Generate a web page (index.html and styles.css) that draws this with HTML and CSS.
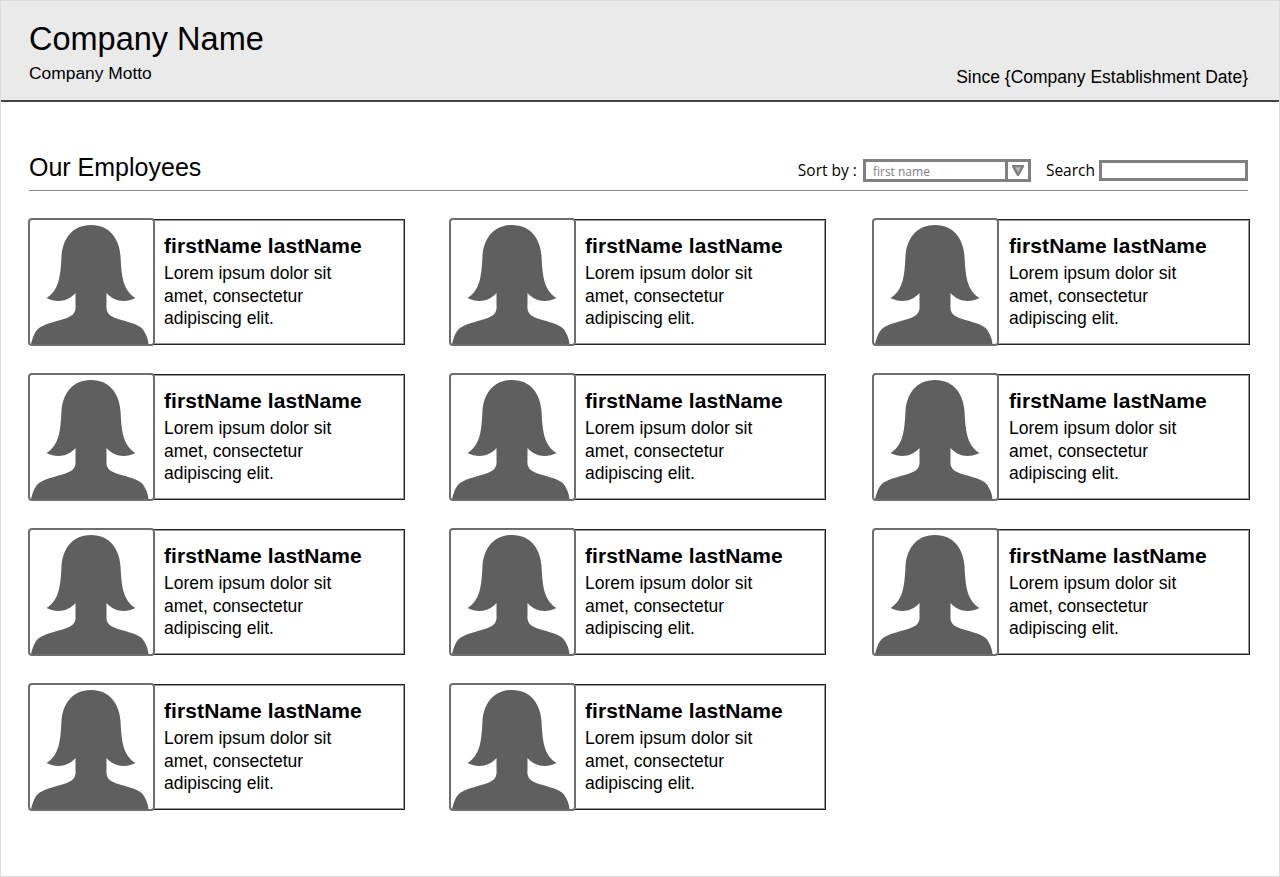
FILE: index.html
```html
<!DOCTYPE html>
<html lang="en">
<head>
    <meta charset="UTF-8">
    <meta name="viewport" content="width=device-width, initial-scale=1.0">
    <title>Our Employees</title>
    <link rel="stylesheet" href="styles.css">
</head>
<body>
    <svg class="sprites" width="0" height="0" aria-hidden="true">
        <symbol id="person" viewBox="0 0 122 124">
            <path d="M60.5 5 C41 5 32 20 31 36 C30 55 29 70 16 78 C26 83 37 82 45 73 L45 85 C46 95 40 97 30 100 C20 103 9 105 5 112 C3 115 1.5 120 0.5 124 L118 124 C117.5 120 116.5 116 114 112 C111 105 101 103 91 100 C81 97 75 95 76 85 L76 73 C84 82 95 83 105 78 C92 70 91 55 90 36 C89 20 80 5 60.5 5 Z"/>
        </symbol>
    </svg>

    <div class="page">
        <header class="top">
            <div>
                <h1>Company Name</h1>
                <div class="motto">Company Motto</div>
            </div>
            <div class="since">Since {Company Establishment Date}</div>
        </header>

        <section class="section">
            <div class="section-head">
                <h2>Our Employees</h2>
                <div class="tools">
                    <label class="tool-label">Sort by :</label>
                    <div class="select">
                        <span class="select-value">first name</span>
                        <span class="select-btn">
                            <svg class="arrow" viewBox="0 0 12 11"><polygon points="1,1 11,1 6,10"/></svg>
                        </span>
                    </div>
                    <label class="tool-label search-label" for="search">Search</label>
                    <input class="search" type="text" id="search">
                </div>
            </div>

            <div class="cards">
                <div class="card">
                    <div class="photo"><svg><use href="#person"/></svg></div>
                    <div class="info">
                        <h3>firstName lastName</h3>
                        <p>Lorem ipsum dolor sit amet, consectetur adipiscing elit.</p>
                    </div>
                </div>
                <div class="card">
                    <div class="photo"><svg><use href="#person"/></svg></div>
                    <div class="info">
                        <h3>firstName lastName</h3>
                        <p>Lorem ipsum dolor sit amet, consectetur adipiscing elit.</p>
                    </div>
                </div>
                <div class="card">
                    <div class="photo"><svg><use href="#person"/></svg></div>
                    <div class="info">
                        <h3>firstName lastName</h3>
                        <p>Lorem ipsum dolor sit amet, consectetur adipiscing elit.</p>
                    </div>
                </div>
                <div class="card">
                    <div class="photo"><svg><use href="#person"/></svg></div>
                    <div class="info">
                        <h3>firstName lastName</h3>
                        <p>Lorem ipsum dolor sit amet, consectetur adipiscing elit.</p>
                    </div>
                </div>
                <div class="card">
                    <div class="photo"><svg><use href="#person"/></svg></div>
                    <div class="info">
                        <h3>firstName lastName</h3>
                        <p>Lorem ipsum dolor sit amet, consectetur adipiscing elit.</p>
                    </div>
                </div>
                <div class="card">
                    <div class="photo"><svg><use href="#person"/></svg></div>
                    <div class="info">
                        <h3>firstName lastName</h3>
                        <p>Lorem ipsum dolor sit amet, consectetur adipiscing elit.</p>
                    </div>
                </div>
                <div class="card">
                    <div class="photo"><svg><use href="#person"/></svg></div>
                    <div class="info">
                        <h3>firstName lastName</h3>
                        <p>Lorem ipsum dolor sit amet, consectetur adipiscing elit.</p>
                    </div>
                </div>
                <div class="card">
                    <div class="photo"><svg><use href="#person"/></svg></div>
                    <div class="info">
                        <h3>firstName lastName</h3>
                        <p>Lorem ipsum dolor sit amet, consectetur adipiscing elit.</p>
                    </div>
                </div>
                <div class="card">
                    <div class="photo"><svg><use href="#person"/></svg></div>
                    <div class="info">
                        <h3>firstName lastName</h3>
                        <p>Lorem ipsum dolor sit amet, consectetur adipiscing elit.</p>
                    </div>
                </div>
                <div class="card">
                    <div class="photo"><svg><use href="#person"/></svg></div>
                    <div class="info">
                        <h3>firstName lastName</h3>
                        <p>Lorem ipsum dolor sit amet, consectetur adipiscing elit.</p>
                    </div>
                </div>
                <div class="card">
                    <div class="photo"><svg><use href="#person"/></svg></div>
                    <div class="info">
                        <h3>firstName lastName</h3>
                        <p>Lorem ipsum dolor sit amet, consectetur adipiscing elit.</p>
                    </div>
                </div>
            </div>
        </section>
    </div>
</body>
</html>
```

FILE: styles.css
```css
/* General Styles */
html, body {
    margin: 0;
    padding: 0;
    height: 100%;
    overflow: hidden;
}

body {
    font-family: 'Liberation Sans', Arial, sans-serif;
    background: #fff;
    color: #000;
}

.sprites {
    display: block;
    height: 0;
}

.page {
    box-sizing: border-box;
    height: 877px;
    border: 1px solid #dcdcdc;
}

/* Header */
.top {
    box-sizing: border-box;
    height: 101px;
    padding: 20px 31px 11px 28px;
    background: #eaeaea;
    border-bottom: 2px solid #444;
    display: flex;
    justify-content: space-between;
    align-items: flex-end;
}

.top h1 {
    margin: 0 0 5px;
    font-size: 32.5px;
    line-height: 38px;
    font-weight: 400;
}

.motto {
    font-size: 17.4px;
    line-height: 20px;
    margin-bottom: 6px;
}

.since {
    font-size: 17.5px;
    line-height: 20px;
    margin-bottom: 2px;
}

/* Section */
.section {
    padding: 51px 30px 0 27px;
}

.section-head {
    height: 38px;
    box-sizing: border-box;
    margin: 0 1px;
    border-bottom: 1px solid #8c8c8c;
    display: flex;
    justify-content: space-between;
    align-items: flex-start;
}

.section-head h2 {
    margin: -1px 0 0;
    font-size: 25px;
    line-height: 30px;
    font-weight: 400;
}

.tools {
    display: flex;
    align-items: center;
    padding-top: 6px;
}

.tool-label {
    font-family: 'Open Sans', sans-serif;
    font-size: 15.5px;
    line-height: 20px;
    margin: -1px 6px 0 0;
}

.search-label {
    margin-left: 15px;
    margin-right: 4px;
}

.select {
    box-sizing: border-box;
    width: 168px;
    height: 23px;
    border: 3px solid #808080;
    display: flex;
    justify-content: space-between;
    background: #fff;
}

.select-value {
    font-family: 'Open Sans', sans-serif;
    font-size: 12px;
    line-height: 20px;
    color: #808080;
    padding-left: 7px;
}

.select-btn {
    width: 20px;
    border-left: 3px solid #808080;
    display: flex;
    align-items: center;
    justify-content: center;
}

.arrow {
    width: 12px;
    height: 11px;
    fill: #b8b8b8;
    stroke: #808080;
    stroke-width: 2.4;
}

.search {
    box-sizing: border-box;
    width: 149px;
    height: 21px;
    padding: 0;
    border: 3px solid #808080;
    background: #fff;
    outline: none;
}

/* Employee cards */
.cards {
    display: grid;
    grid-template-columns: 421px 423px 378px;
    grid-auto-rows: 128px;
    row-gap: 27px;
    margin-top: 27px;
}

.card {
    box-sizing: border-box;
    display: flex;
    height: 128px;
}

.card:nth-child(3n+1) {
    margin-right: 44px;
}

.card:nth-child(3n+2) {
    margin-right: 46px;
}

.card:nth-child(3n) .info {
    padding-left: 11px;
}

.photo {
    box-sizing: border-box;
    flex: none;
    width: 127px;
    height: 128px;
    border: 2px solid #6e6e6e;
    border-radius: 4px;
    background: #fff;
    overflow: hidden;
}

.photo svg {
    display: block;
    width: 100%;
    height: 100%;
    fill: #5f5f5f;
}

.info {
    box-sizing: border-box;
    flex: 1;
    margin: 1px 0 1px -1px;
    padding: 14px 0 0 10px;
    border: 1px solid #222;
    border-left: none;
    box-shadow: inset 0 -1px 0 #999, inset -1px 0 0 #999, inset 0 1px 0 #999;
}

.info h3 {
    margin: 0;
    font-size: 21px;
    line-height: 24px;
    font-weight: 700;
    letter-spacing: 0.1px;
}

.info p {
    margin: 4px 0 0;
    width: 190px;
    font-size: 17.5px;
    line-height: 22.5px;
}
```
